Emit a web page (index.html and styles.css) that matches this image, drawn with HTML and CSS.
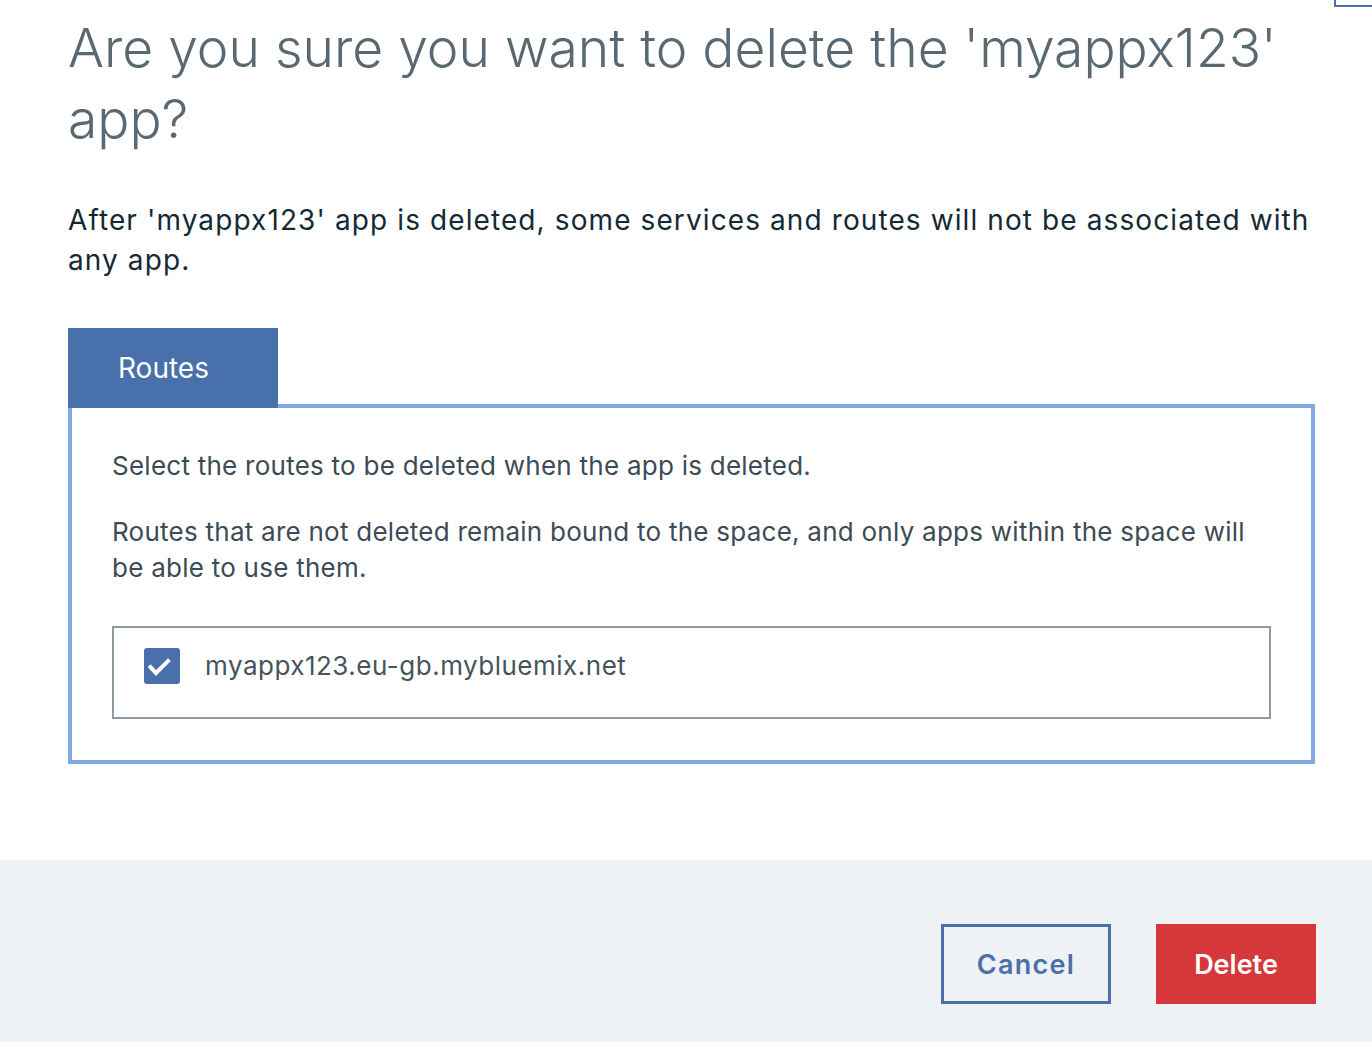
FILE: index.html
```html
<!DOCTYPE html>
<html lang="en">
<head>
<meta charset="utf-8">
<title>Delete app</title>
<link rel="stylesheet" href="styles.css">
</head>
<body>
<div class="modal">
  <span class="close-edge" aria-hidden="true"></span>
  <div class="modal-body">
    <h1 class="title">Are you sure you want to delete the 'myappx123' app?</h1>
    <p class="lead">After 'myappx123' app is deleted, some services and routes will not be associated with any app.</p>
    <div class="tabs">
      <div class="tab">Routes</div>
    </div>
    <div class="panel">
      <p class="panel-text">Select the routes to be deleted when the app is deleted.</p>
      <p class="panel-text panel-text-gap">Routes that are not deleted remain bound to the space, and only apps within the space will be able to use them.</p>
      <label class="route-row">
        <span class="checkbox">
          <svg viewBox="0 0 36 36" width="36" height="36" aria-hidden="true">
            <rect x="0" y="0" width="36" height="36" rx="3" ry="3" fill="#4a6fab"/>
            <polyline points="6.5,19 12,25 24,13" fill="none" stroke="#ffffff" stroke-width="4" stroke-linecap="square" stroke-linejoin="miter"/>
          </svg>
        </span>
        <span class="route-name">myappx123.eu-gb.mybluemix.net</span>
      </label>
    </div>
  </div>
  <div class="modal-footer">
    <button class="btn btn-secondary" type="button">Cancel</button>
    <button class="btn btn-danger" type="button">Delete</button>
  </div>
</div>
</body>
</html>
```

FILE: styles.css
```css
* {
  box-sizing: border-box;
}

html, body {
  margin: 0;
  padding: 0;
  background: #ffffff;
}

body {
  font-family: "Inter", "Noto Sans", "Liberation Sans", sans-serif;
  width: 1372px;
  height: 1042px;
  overflow: hidden;
}

.modal {
  position: relative;
  display: flex;
  flex-direction: column;
  height: 1042px;
}

.close-edge {
  position: absolute;
  top: 0;
  left: 1334px;
  width: 40px;
  height: 7px;
  border-left: 2px solid #4a70ab;
  border-bottom: 2px solid #4a70ab;
}

.modal-body {
  flex: 1;
  padding: 12px 57px 0 68px;
}

.title {
  margin: 0;
  font-size: 53.4px;
  font-weight: 300;
  line-height: 71px;
  color: #5a6872;
  letter-spacing: 0;
}

.lead {
  margin: 46px 0 0 0;
  font-size: 28px;
  line-height: 40px;
  letter-spacing: 1.1px;
  color: #152935;
}

.tabs {
  display: flex;
  margin-top: 48px;
}

.tab {
  position: relative;
  z-index: 1;
  width: 210px;
  height: 80px;
  display: flex;
  align-items: center;
  padding-left: 50px;
  background: #4870ab;
  color: #ffffff;
  font-size: 28px;
}

.panel {
  margin-top: -4px;
  border: 4px solid #80aae6;
  padding: 40px 40px 41px 40px;
}

.panel-text {
  margin: 0;
  font-size: 26px;
  line-height: 36px;
  letter-spacing: 0.25px;
  color: #3d4b56;
}

.panel-text-gap {
  margin-top: 30px;
}

.route-row {
  display: flex;
  align-items: flex-start;
  margin-top: 40px;
  height: 93px;
  border: 2px solid #8c9ba5;
  padding: 20px 30px 0 30px;
}

.checkbox {
  display: block;
  width: 36px;
  height: 36px;
  flex: none;
}

.checkbox svg {
  display: block;
}

.route-name {
  margin-left: 25px;
  font-size: 26px;
  line-height: 36px;
  letter-spacing: 0.5px;
  color: #46545e;
}

.modal-footer {
  height: 182px;
  flex: none;
  background: #eff2f5;
  display: flex;
  justify-content: flex-end;
  align-items: flex-start;
  padding: 64px 56px 0 0;
  gap: 45px;
}

.btn {
  height: 80px;
  font-family: "Inter", "Noto Sans", "Liberation Sans", sans-serif;
  font-size: 27px;
  font-weight: 600;
  cursor: pointer;
  margin: 0;
  padding: 0;
}

.btn-secondary {
  width: 170px;
  background: transparent;
  border: 3px solid #4a70ab;
  color: #4a70ab;
  letter-spacing: 1.3px;
}

.btn-danger {
  width: 160px;
  background: #d6373b;
  border: none;
  color: #ffffff;
  letter-spacing: 0;
}
```
